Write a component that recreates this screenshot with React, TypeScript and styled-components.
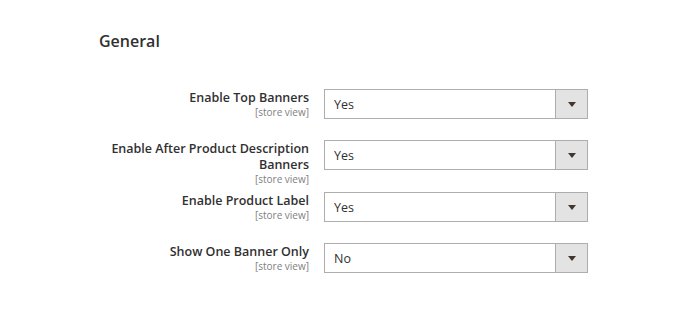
import React from 'react';
import styled, { createGlobalStyle } from 'styled-components';

type Field = {
  id: string;
  label: string;
  value: string;
};

const fields: Field[] = [
  { id: 'top_banners', label: 'Enable Top Banners', value: 'Yes' },
  { id: 'after_description', label: 'Enable After Product Description Banners', value: 'Yes' },
  { id: 'product_label', label: 'Enable Product Label', value: 'Yes' },
  { id: 'one_banner', label: 'Show One Banner Only', value: 'No' },
];

const GlobalStyle = createGlobalStyle`
  body {
    margin: 0;
    background: #ffffff;
    font-family: 'Open Sans', 'Liberation Sans', sans-serif;
    color: #303030;
  }
`;

function App() {
  return (
    <>
      <GlobalStyle />
      <Wrapper>
        <Title>General</Title>
        <FieldList>
          {fields.map((field) => (
            <Row key={field.id}>
              <Label htmlFor={field.id}>
                <LabelText>{field.label}</LabelText>
                <Scope>[store view]</Scope>
              </Label>
              <SelectBox>
                <Select id={field.id} defaultValue={field.value}>
                  <option value="Yes">Yes</option>
                  <option value="No">No</option>
                </Select>
                <Arrow>
                  <Triangle />
                </Arrow>
              </SelectBox>
            </Row>
          ))}
        </FieldList>
      </Wrapper>
    </>
  );
}

const Wrapper = styled.div`
  width: 685px;
  height: 313px;
  box-sizing: border-box;
  padding: 31px 0 0 99px;
`;

const Title = styled.h2`
  margin: 0 0 38px;
  font-size: 16px;
  line-height: 20px;
  font-weight: 600;
  color: #303030;
`;

const FieldList = styled.div`
  display: flex;
  flex-direction: column;
  gap: 21px;
`;

const Row = styled.div`
  display: grid;
  grid-template-columns: 210px 264px;
  column-gap: 15px;
  align-items: start;
`;

// the scope note hangs below the label without pushing the next row down
const Label = styled.label`
  display: flex;
  flex-direction: column;
  align-items: flex-end;
  padding-top: 1px;
  margin-bottom: -2px;
  text-align: right;
`;

const LabelText = styled.span`
  font-size: 12.5px;
  line-height: 16px;
  font-weight: 600;
  color: #303030;
`;

const Scope = styled.span`
  font-size: 10px;
  line-height: 12px;
  color: #808080;
  margin-bottom: -12px;
`;

const SelectBox = styled.div`
  display: flex;
  height: 30px;
  box-sizing: border-box;
  border: 1px solid #adadad;
  background: #ffffff;
`;

const Select = styled.select`
  flex: 1;
  min-width: 0;
  appearance: none;
  border: 0;
  outline: none;
  background: transparent;
  padding: 0 9px;
  font-family: 'Open Sans', 'Liberation Sans', sans-serif;
  font-size: 12.5px;
  color: #303030;
`;

const Arrow = styled.span`
  flex: 0 0 31px;
  display: flex;
  align-items: center;
  justify-content: center;
  border-left: 1px solid #adadad;
  background: #e3e3e3;
`;

const Triangle = styled.span`
  width: 0;
  height: 0;
  border-left: 4px solid transparent;
  border-right: 4px solid transparent;
  border-top: 5px solid #41362f;
`;

export default App;
